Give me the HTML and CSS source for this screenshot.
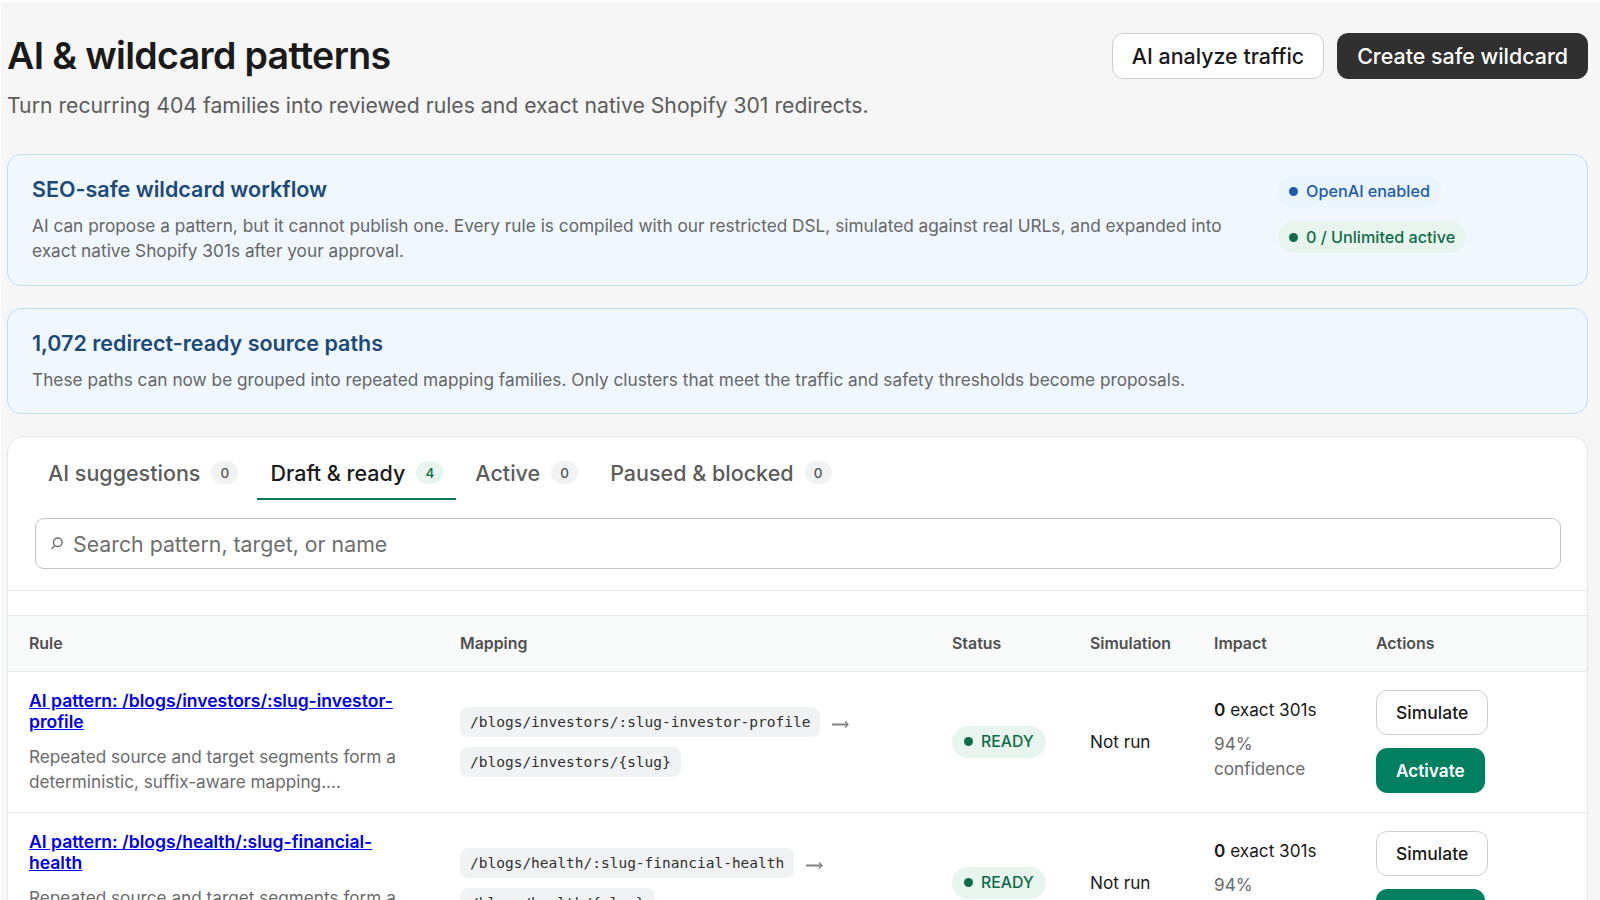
FILE: index.html
```html
<!DOCTYPE html>
<html lang="en">
  <head>
    <meta charset="UTF-8" />
    <meta name="viewport" content="width=device-width, initial-scale=1.0" />
    <title>AI &amp; wildcard patterns</title>
    <link rel="stylesheet" href="styles.css">
  </head>
  <body>
    <div class="page">
      <header class="page-header">
        <div>
          <h1>AI &amp; wildcard patterns</h1>
          <p class="subtitle">Turn recurring 404 families into reviewed rules and exact native Shopify 301 redirects.</p>
        </div>
        <div class="header-actions">
          <button class="btn btn-large">AI analyze traffic</button>
          <button class="btn btn-large btn-dark">Create safe wildcard</button>
        </div>
      </header>

      <section class="banner banner-split">
        <div class="banner-text">
          <h2>SEO-safe wildcard workflow</h2>
          <p>AI can propose a pattern, but it cannot publish one. Every rule is compiled with our restricted DSL, simulated against real URLs, and expanded into exact native Shopify 301s after your approval.</p>
        </div>
        <div class="banner-pills">
          <span class="pill pill-blue"><i class="dot"></i>OpenAI enabled</span>
          <span class="pill pill-green"><i class="dot"></i>0 / Unlimited active</span>
        </div>
      </section>

      <section class="banner">
        <h2>1,072 redirect-ready source paths</h2>
        <p>These paths can now be grouped into repeated mapping families. Only clusters that meet the traffic and safety thresholds become proposals.</p>
      </section>

      <section class="panel">
        <nav class="tabs">
          <a class="tab">AI suggestions <span class="count">0</span></a>
          <a class="tab selected">Draft &amp; ready <span class="count count-green">4</span></a>
          <a class="tab">Active <span class="count">0</span></a>
          <a class="tab">Paused &amp; blocked <span class="count">0</span></a>
        </nav>

        <div class="search-row">
          <div class="search">
            <svg class="search-icon" width="15" height="15" viewBox="0 0 14 14" fill="none" stroke="#6b6b6b" stroke-width="1.3"><circle cx="8.2" cy="5.8" r="4"/><path d="M5.4 8.8 2.4 12"/></svg>
            <input type="text" placeholder="Search pattern, target, or name">
          </div>
        </div>

        <div class="spacer"></div>

        <table class="rules">
          <thead>
            <tr>
              <th class="col-rule">Rule</th>
              <th class="col-mapping">Mapping</th>
              <th class="col-status">Status</th>
              <th class="col-sim">Simulation</th>
              <th class="col-impact">Impact</th>
              <th>Actions</th>
            </tr>
          </thead>
          <tbody>
            <tr>
              <td>
                <a class="rule-link" href="#">AI pattern: /blogs/investors/:slug-investor-profile</a>
                <p class="rule-desc">Repeated source and target segments form a deterministic, suffix-aware mapping....</p>
              </td>
              <td>
                <div class="mapping">
                  <code>/blogs/investors/:slug-investor-profile</code>
                  <svg class="arrow" width="17" height="10" viewBox="0 0 17 10" fill="none" stroke="#808080"><path d="M0 5.5h16" stroke-width="2"/><path d="M13 2.5l3 3-3 3" stroke-width="1.2"/></svg>
                  <code>/blogs/investors/{slug}</code>
                </div>
              </td>
              <td><span class="pill pill-green pill-status"><i class="dot"></i>READY</span></td>
              <td>Not run</td>
              <td>
                <div><strong>0</strong> exact 301s</div>
                <div class="confidence">94% confidence</div>
              </td>
              <td>
                <div class="row-actions">
                  <button class="btn">Simulate</button>
                  <button class="btn btn-green">Activate</button>
                </div>
              </td>
            </tr>
            <tr>
              <td>
                <a class="rule-link" href="#">AI pattern: /blogs/health/:slug-financial-health</a>
                <p class="rule-desc">Repeated source and target segments form a deterministic, suffix-aware mapping....</p>
              </td>
              <td>
                <div class="mapping">
                  <code>/blogs/health/:slug-financial-health</code>
                  <svg class="arrow" width="17" height="10" viewBox="0 0 17 10" fill="none" stroke="#808080"><path d="M0 5.5h16" stroke-width="2"/><path d="M13 2.5l3 3-3 3" stroke-width="1.2"/></svg>
                  <code>/blogs/health/{slug}</code>
                </div>
              </td>
              <td><span class="pill pill-green pill-status"><i class="dot"></i>READY</span></td>
              <td>Not run</td>
              <td>
                <div><strong>0</strong> exact 301s</div>
                <div class="confidence">94% confidence</div>
              </td>
              <td>
                <div class="row-actions">
                  <button class="btn">Simulate</button>
                  <button class="btn btn-green">Activate</button>
                </div>
              </td>
            </tr>
          </tbody>
        </table>
      </section>
    </div>
  </body>
</html>
```

FILE: styles.css
```css
html,
body {
  height: 900px;
  overflow: hidden;
}
body {
  font-family: Inter, "Noto Sans", sans-serif;
  margin: 0;
  background: #f6f6f6;
  color: #1a1a1a;
  font-size: 17.2px;
  border-top: 2px solid #fff;
  border-left: 1px solid #fff;
}
.page {
  padding: 31px 12px 0 6px;
}
.page-header {
  display: flex;
  justify-content: space-between;
  align-items: flex-start;
  margin-bottom: 33px;
}
h1 {
  margin: 0;
  font-size: 37.5px;
  line-height: 46px;
  font-weight: 600;
  letter-spacing: -0.65px;
}
.subtitle {
  margin: 10px 0 0;
  font-size: 21.2px;
  line-height: 32px;
  color: #5c5c5c;
}
.header-actions {
  display: flex;
  gap: 13px;
}
.btn {
  font-family: inherit;
  font-size: 17.5px;
  font-weight: 500;
  color: #1a1a1a;
  background: #fff;
  border: 1.5px solid #cfcfcf;
  border-radius: 11px;
  padding: 0 19px;
  height: 45px;
  cursor: pointer;
}
.btn-large {
  font-size: 21.4px;
  height: 46px;
}
.btn-dark {
  background: #303030;
  border-color: #303030;
  color: #fff;
}
.btn-green {
  background: #008060;
  border-color: #008060;
  color: #fff;
  font-size: 17.2px;
  font-weight: 600;
}
.banner {
  background: #f0f7ff;
  border: 1px solid #bcdcf7;
  border-radius: 14px;
  padding: 20px 24px 21.5px;
  margin-bottom: 22px;
}
.banner-split {
  display: flex;
  justify-content: space-between;
}
.banner-text {
  width: 1196px;
}
.banner h2 {
  margin: 0 0 10px;
  font-size: 21.5px;
  line-height: 28px;
  font-weight: 600;
  color: #1c4a78;
}
.banner p {
  margin: 0;
  font-size: 17.25px;
  line-height: 25px;
  color: #666;
}
.banner-pills {
  display: flex;
  flex-direction: column;
  align-items: flex-start;
  gap: 14px;
  width: 285px;
}
.pill {
  display: inline-flex;
  align-items: center;
  gap: 8px;
  height: 32px;
  padding: 0 11px;
  border-radius: 16px;
  font-size: 16.2px;
  font-weight: 500;
}
.dot {
  width: 9px;
  height: 9px;
  border-radius: 50%;
  background: currentColor;
}
.pill-blue {
  background: #eaf4ff;
  color: #1f5ca8;
}
.pill-green {
  background: #e8f5ee;
  color: #0f6b47;
}
.pill-status {
  padding: 0 12px;
  font-size: 15.8px;
}
.panel {
  background: #fff;
  border: 1px solid #e6e6e6;
  border-radius: 16px;
  overflow: hidden;
}
.tabs {
  display: flex;
  padding: 14px 0 0 27px;
  gap: 6px;
}
.tab {
  display: flex;
  align-items: center;
  gap: 11px;
  height: 43px;
  padding: 0 13px 4px;
  font-size: 21.5px;
  color: #5c5c5c;
  font-weight: 500;
  border-bottom: 2px solid transparent;
}
.tab.selected {
  color: #1a1a1a;
  border-bottom-color: #0b7a5a;
}
.count {
  display: flex;
  align-items: center;
  justify-content: center;
  width: 17px;
  height: 23px;
  padding: 0 5px;
  border-radius: 12px;
  background: #f1f2f4;
  color: #555;
  font-size: 13.5px;
}
.count-green {
  background: #e8f5ee;
  color: #0f6b47;
}
.search-row {
  padding: 18px 26px 21px 27px;
  border-bottom: 1px solid #e6e6e6;
}
.search {
  display: flex;
  align-items: center;
  height: 49px;
  border: 1px solid #c4c4c4;
  border-radius: 9px;
  padding: 0 14px 0 13px;
  gap: 7px;
}
.search input {
  flex: 1;
  border: none;
  outline: none;
  font-family: inherit;
  font-size: 21.3px;
  color: #1a1a1a;
  background: none;
}
.search input::placeholder {
  color: #6e6e6e;
}
.spacer {
  height: 24px;
}
.rules {
  width: 100%;
  border-collapse: collapse;
  table-layout: fixed;
}
.rules th {
  height: 55px;
  padding: 0 0 0 21px;
  text-align: left;
  font-size: 15.9px;
  font-weight: 600;
  color: #4f4f4f;
  background: #f9fafa;
  border-top: 1px solid #e9e9e9;
  border-bottom: 1px solid #e9e9e9;
}
.col-rule {
  width: 410px;
}
.col-mapping {
  width: 471px;
}
.col-status {
  width: 117px;
}
.col-sim {
  width: 103px;
}
.col-impact {
  width: 141px;
}
.rules td {
  padding: 18px 0 18px 21px;
  vertical-align: middle;
  line-height: 25px;
  border-bottom: 1px solid #e9e9e9;
}
.rule-link {
  display: block;
  color: #0000ee;
  font-weight: 600;
  font-size: 17.55px;
  line-height: 21.4px;
  width: 380px;
}
.rule-desc {
  margin: 11px 0 0;
  color: #6b6b6b;
  width: 380px;
}
.mapping {
  display: flex;
  flex-wrap: wrap;
  align-items: center;
  gap: 10px 12px;
}
code {
  font-family: "DejaVu Sans Mono", monospace;
  font-size: 14.5px;
  line-height: 20px;
  padding: 5px 10px;
  background: #f1f2f4;
  border-radius: 8px;
  color: #303030;
  white-space: nowrap;
}
.arrow {
  margin-top: 4px;
}
.confidence {
  margin: 9px 0 6px;
  color: #6b6b6b;
  width: 100px;
}
strong {
  font-weight: 600;
}
.row-actions {
  display: flex;
  flex-direction: column;
  align-items: flex-start;
  gap: 13px;
}
```
